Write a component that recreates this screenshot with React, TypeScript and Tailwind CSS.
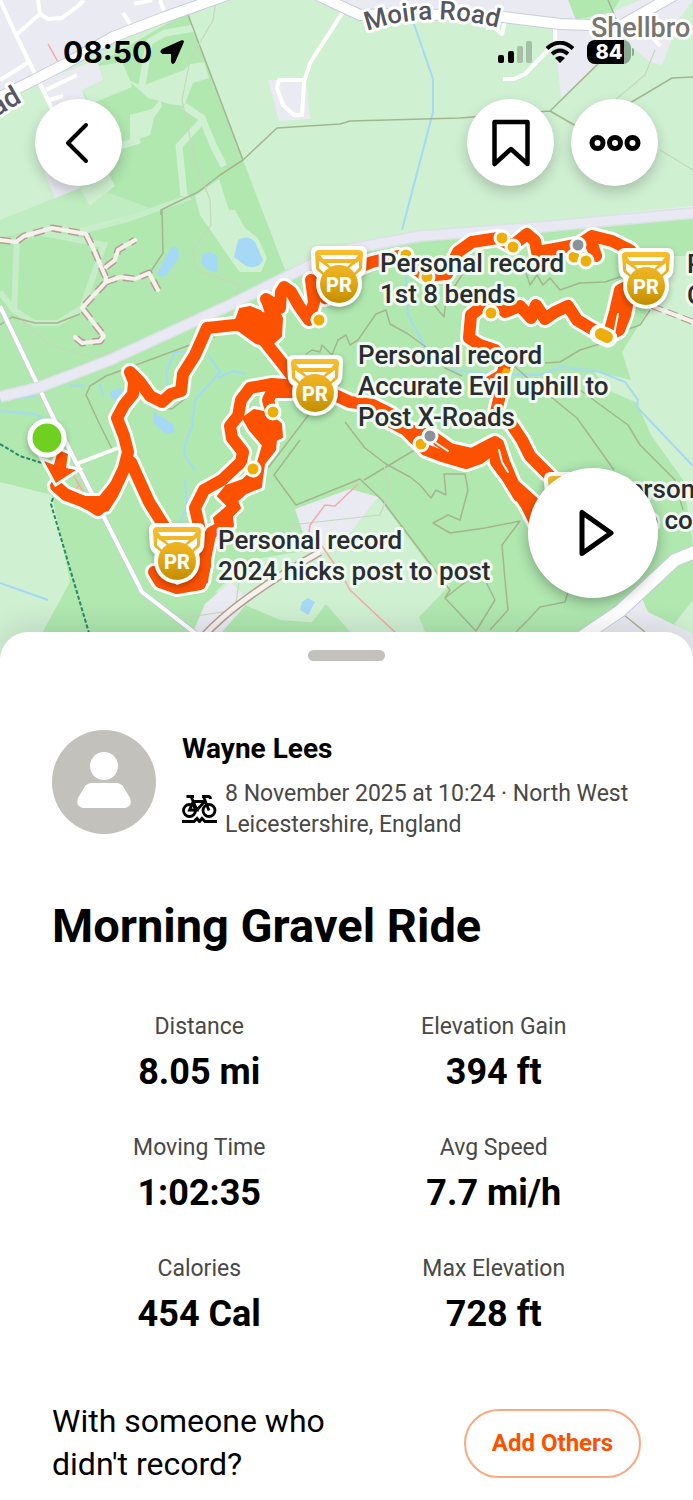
import type { ReactNode } from "react";

const stats = [
  { label: "Distance", value: "8.05 mi" },
  { label: "Elevation Gain", value: "394 ft" },
  { label: "Moving Time", value: "1:02:35" },
  { label: "Avg Speed", value: "7.7 mi/h" },
  { label: "Calories", value: "454 Cal" },
  { label: "Max Elevation", value: "728 ft" },
];

const pins = [
  { x: 339, y: 246, tx: 380, ty: 272, lines: ["Personal record", "1st 8 bends"] },
  { x: 646, y: 248, tx: 687, ty: 273, lines: ["Personal record", "C"] },
  { x: 572, y: 472, tx: 613, ty: 498, lines: ["Personal record", "   the co"] },
  { x: 315, y: 355, tx: 358, ty: 364, lines: ["Personal record", "Accurate Evil uphill to", "Post X-Roads"] },
  { x: 177, y: 523, tx: 218, ty: 549, lines: ["Personal record", "2024 hicks post to post"] },
];

// Segment start / end dots along the route
const dots = [
  [319, 320], [273, 412], [253, 469], [502, 238], [513, 247], [574, 257], [586, 261],
  [491, 313], [421, 444], [427, 277], [406, 255], [556, 483],
];

const route = [
  "M56 486 L66 495 L82 501 L92 506 L98 510 L105 500 L116 485 L124 468 L128 452 L124 436 L117 418 L124 405 L133 394 L134 382 L130 372 L140 382 L150 396 L162 402 L171 394 L181 391 L183 374 L195 355 L207 328 L235 325 L250 322",
  "M262 318 L276 330 L268 303 L266 299 L280 308 L281 292 L284 287 L291 292 L299 306 L309 320 L314 302 L311 280 L325 298 L340 290",
  "M262 338 L278 358 L292 376",
  "M340 275 L372 262 L398 256 L425 276 L447 274 L458 252 L472 242 L498 238 L512 246 L527 234 L535 241 L537 252 L560 248 L580 244 L592 236 L612 241 L630 250 L640 262",
  "M589 240 L596 256 L590 238",
  "M632 284 L620 290 L615 312 L608 337 M630 290 L625 315 L619 330 L606 337",
  "M606 337 L587 326 L577 320 L568 306 L555 312 L545 319 L536 305 L531 318 L520 306 L505 312 L495 300 L480 308 L471 315 L469 338 L480 345 L495 350 L506 362 L502 375 L490 382 L500 395 L496 412 L512 425 L522 440 L530 456 L544 470 L558 484",
  "M320 388 L350 402 L373 405 L391 414 L412 436 L426 450 L442 456 L466 463 L480 458 L498 444 L504 462 L514 486 L527 506 L536 524",
  "M365 408 L402 428 L432 436 L450 449 L472 454 L495 442 L496 462 L508 478 L519 496",
  "M300 386 L272 384 L250 388 L241 400 L238 416 L230 426 L232 438 L243 452 L241 462 L222 480 L204 490 L195 508 L199 526",
  "M300 392 L272 392 L268 400 L272 414",
  "M224 526 L212 532 L205 543 L205 566 L200 584 L177 588 L160 582 L154 572 L172 574",
  "M131 462 L139 480 L149 502 L164 526",
];

// Spots where laps overlap into one wide patch
const patches = [
  "M236 320 L240 309 L250 307 L260 311 L270 322 L274 303 L282 318 L281 336 L270 346 L256 343 L238 330 Z",
  "M243 418 L254 410 L268 413 L281 424 L282 437 L276 440 L275 450 L264 464 L262 478 L261 487 L246 493 L237 501 L240 508 L232 516 L233 526 L217 530 L214 518 L228 506 L218 496 L226 486 L243 480 L257 466 L263 445 L250 430 Z",
  "M54 483 L58 494 L75 503 L88 505 L96 514 L108 510 L117 496 L129 470 L128 450 L116 478 L100 497 L84 497 L66 489 Z",
  "M455 458 L482 448 L497 440 L505 452 L516 480 L538 500 L536 520 L516 496 L496 470 L492 456 L476 462 Z",
  "M202 535 L216 530 L210 560 L207 582 L196 590 L172 590 L158 582 L155 572 L190 582 L202 568 Z",
];

const fireTracks =
  "M0 240 L16 242 L24 236 L52 228 L86 234 L94 250 L106 278 L106 282 L82 308 L104 336 L100 341 L82 343 L75 337 M106 267 L115 260 L118 250 L135 240 M106 282 L120 277 L135 279 L149 273 L158 290";
const lane = "M202 638 Q235 600 320 552";
const townRoads =
  "M0 0 L16 35 L60 125 M38 0 L40 14 L16 35 M40 14 L48 19 L62 18 L78 6 L84 0 M123 13 L131 25 M134 4 L152 0 M160 0 L164 11 M0 80 L29 62 M46 90 L77 75 M49 100 L63 96";
const leftRoad = "M0 97 L30 82 L67 63 L113 37 L165 17 L230 -6";
const moiraRoad = "M315 -6 L360 15 L400 14 L495 16 L560 24 L620 26 L680 -8";
const southRoad = "M570 645 L620 611 L675 560 L700 550";
const mainRoad = "M0 397 L40 387 L110 360 L230 305 L310 265 L343 250 L420 236 L540 227 L693 213";

function Map() {
  return (
    <svg
      className="h-full w-full"
      viewBox="0 0 693 664"
      preserveAspectRatio="xMidYMin slice"
      fontFamily="Roboto, sans-serif"
      role="img"
      aria-label="Route map"
    >
      <defs>
        <linearGradient id="gold" gradientUnits="userSpaceOnUse" x1="0" y1="4" x2="0" y2="58">
          <stop offset="0" stopColor="#f8be30" />
          <stop offset="0.55" stopColor="#e5aa18" />
          <stop offset="1" stopColor="#c18c00" />
        </linearGradient>
        <filter id="lift" x="-30%" y="-30%" width="160%" height="170%">
          <feDropShadow dx="0" dy="3" stdDeviation="3" floodOpacity="0.28" />
        </filter>
        <path id="moira" d="M367 31 Q430 9 503 29" />
      </defs>
      <rect width="693" height="664" fill="#d0f0d2" />

      {/* Woodland */}
      <path fill="#b0e8b0" d="M94 66 L187 12 L243 160 L285 270 L343 250 L540 229 L693 212 V664 H25 L70 582 L52 495 L0 482 V220 L55 198 L86 186 L122 146 L84 98 L82 90 L103 80 Z" />
      <path fill="#b0e8b0" d="M568 0 H620 L612 12 L575 20 Z" />
      <path fill="#d0f0d2" d="M82 90 L103 80 L98 66 L122 62 L130 80 L132 87 L98 101 L90 104 Z" />
      <path fill="#d0f0d2" d="M130 115 L152 109 L160 100 L162 106 L154 118 L150 135 L130 142 Z" />
      <path fill="#d0f0d2" d="M80 188 L108 173 L115 186 L90 206 Z" />
      <path fill="#d0f0d2" d="M128 80 L142 86 L184 70 L190 64 L204 62 L209 78 L193 83 L184 106 L170 104 L148 98 Z" />
      <path fill="none" stroke="#d0f0d2" strokeWidth="7" strokeLinejoin="round" d="M142 86 L149 42 L165 33 L195 28 M120 146 L140 140 M184 106 L202 118 L214 147 L224 166 M201 122 L179 146 L184 196" />
      <path fill="#d0f0d2" d="M219 179 L230 213 L250 252 L255 270 L238 270 L200 215 L195 196 Z" />
      <path fill="#b0e8b0" d="M222 178 L240 160 L273 238 L245 237 Z" />
      <path fill="#d0f0d2" d="M204 210 L235 210 L245 228 L258 238 L267 258 L261 272 L240 272 L228 255 Z" />
      <path fill="none" stroke="#d0f0d2" strokeWidth="6" opacity=".7" d="M0 292 L14 310 L34 323 L58 323 L82 308 L104 245 L38 232 L17 239 L14 312 M78 232 L128 219 L190 197" />
      <path fill="#d0f0d2" d="M0 217 L25 209 L80 182 L150 208 L84 233 L48 228 L0 238 Z" opacity=".5" />

      <path fill="#d0f0d2" d="M622 256 H693 V545 L683 480 L651 435 L637 403 L610 391 L593 371 L631 380 L622 352 L648 310 Z" />
      <path fill="#d0f0d2" d="M378 497 L425 560 L450 585 L419 617 L438 664 H300 L345 625 L280 620 L215 592 L250 560 L340 545 Z" />
      <path fill="#b0e8b0" d="M255 622 L290 633 V664 H280 Z M326 604 L350 632 V664 H280 Z" />
      <path fill="#d0f0d2" d="M693 600 L674 624 L693 640 Z" />

      {/* Built-up areas */}
      <g fill="#eaeaf3">
        <path d="M0 0 H210 L110 35 L20 85 L0 96 Z M38 82 L97 60 L103 80 L82 90 L86 100 L56 120 Z M44 172 L80 188 L55 198 Z" />
        <path d="M268 80 L306 80 L310 119 L279 121 Z M315 0 H568 L576 20 L480 15 L360 18 Z M554 28 L596 25 L618 52 L600 60 L561 98 Z M612 12 L640 0 H693 L680 18 L662 65 L650 62 L630 45 Z" />
        <path d="M295 509 L350 489 L378 497 L350 533 L312 560 Z M193 632 L205 604 L230 582 L250 600 L215 640 Z M575 640 L641 596 L648 612 L693 634 V664 H575 Z" />
        <path d="M620 213 L693 206 V216 L600 224 Z" />
      </g>

      {/* Water */}
      <path fill="#a5d9f5" d="M171 248 Q180 244 179 257 L167 275 Q158 279 157 273 Z M203 254 Q214 249 218 259 V270 Q212 276 201 263 Z M238 240 Q247 234 255 242 L263 260 Q258 270 246 266 L234 257 Z M110 392 Q120 385 125 392 L121 402 Q110 402 110 392 Z M154 412 L173 424 L175 432 L166 434 L153 422 Z M302 602 L308 598 L315 602 L308 615 L300 610 Z" />
      <g fill="none" stroke="#a5d9f5" strokeWidth="2">
        <path d="M414 24 L433 79 L433 112 L402 230 M406 275 L408 315 L426 348 L448 370 L500 374 L540 375 L562 367 L600 372 L625 382 L638 400 L637 407 L657 428 L693 466" />
        <path d="M168 388 L166 372 L175 352 L190 352 M208 355 L220 372 L195 400 L192 425 M218 378 L233 371 L246 374 M70 386 L85 385 M100 384 L103 395 M0 400 L35 396 M0 411 L35 414 L55 425 M193 425 L186 440 L184 455 L195 470 M185 480 L187 505 L180 523 M0 583 L48 600" />
      </g>

      {/* Tracks */}
      <g fill="none" stroke="#a5b590" strokeWidth="1.5" strokeLinejoin="round">
        <path d="M187 12 L243 160 M161 215 V210 L198 192 L220 175 L243 160 L277 128 L340 124 L350 121 L460 118 L550 111 L600 62 M550 111 L576 126 M608 0 L618 24 M630 103 L672 78 L693 77" />
        <path d="M162 210 L163 253 L149 274 M0 325 L12 317 L35 323 L57 323 L80 314 M100 425 L86 395 L90 386 L106 376 L190 345 L200 335 L215 337 M160 408 L172 409 L186 398" />
        <path d="M306 354 L312 350 L320 352 L322 345 L332 355 L338 340 L346 335 L350 345 L358 340 L376 314 L386 310 L390 324 L408 334 L430 350 L445 368 L462 376 M430 300 L444 317 L446 300 L465 270 L470 254" />
        <path d="M525 270 L530 285 L537 275 L543 285 L550 278 L560 290 L580 283 L605 282 L620 277 M650 310 L640 325 L620 332 L606 342 L580 350 L560 362 L545 363" />
        <path d="M345 422 L365 448 L386 464 L410 477 L420 485 L431 498 L436 490 L446 495 L444 474 L465 474 L468 490 L460 520 L448 515 L433 523 L450 533 L485 528 L520 521 L502 545 L505 580 L508 610 L490 630 M364 480 L440 435" />
        <path d="M300 440 L274 475 L296 505 L360 479 L382 500 L450 590 L445 598 L476 631 L495 600 L485 580 M445 598 L468 580 M490 345 L530 380 L577 418 L614 470 M580 390 L628 425 L640 445 L675 480 L683 510 M568 592 L565 602 L540 607 L528 620 L516 632 M268 468 L320 400" />
        <path d="M100 425 L112 449 M624 615 L645 632" />
      </g>
      <path fill="none" stroke="#c5d8b9" strokeWidth="1.2" d="M216 0 L213 20 L190 60 L182 100 L195 160 L210 200 L211 225 L193 250 L196 270 L240 285 L235 300 L160 340 L90 357 L50 345 L20 320 M655 50 L645 75 L615 100 M660 150 L693 170 M146 590 Q150 612 190 617 L235 610 L242 560 M290 525 L380 515 L390 490 L384 465" />
      <g fill="none" strokeLinejoin="round">
        <path stroke="#b59d94" strokeWidth="7" strokeDasharray="11 7" d={fireTracks} />
        <path stroke="#f6f1ec" strokeWidth="4" strokeLinecap="round" d={fireTracks} />
        <path stroke="#b59d94" strokeWidth="6" strokeDasharray="11 5" d="M652 306 L693 322" />
        <path stroke="#f6f1ec" strokeWidth="4" d="M652 306 L693 322" />
        <path stroke="#b59d94" strokeWidth="8" d={lane} />
        <path stroke="#f6f1ec" strokeWidth="5" d={lane} />
      </g>
      <path fill="none" stroke="#f5aaa6" strokeWidth="1.5" d="M48 44 L58 62 M308 540 L310 525 L325 505 L335 506 L358 484 M322 546 L342 575 L350 590 L397 634 M72 473 L84 493 M75 490 L80 484" />
      <path fill="none" stroke="#258b63" strokeWidth="2" strokeDasharray="4 2" d="M0 444 L20 456 L45 464 M53 498 L51 504 L68 562 L89 633" />

      {/* Roads */}
      <g fill="none" stroke="#fff" strokeLinejoin="round">
        <path strokeWidth="4" d={townRoads} />
        <path strokeWidth="4" d="M343 12 L310 63 L304 82 L302 115 L294 115 L283 105 L277 88 L279 80 L304 80 M503 79 L514 79 L525 74 L550 48 L555 42 V28 M486 28 H495 L502 34 L505 22 M650 34 L660 46" />
        <path stroke="#c9cdda" strokeWidth="12" d={leftRoad} />
        <path strokeWidth="10" d={leftRoad} />
        <path stroke="#c9cdda" strokeWidth="12" d={moiraRoad} />
        <path strokeWidth="10" d={moiraRoad} />
        <path stroke="#c9cdda" strokeWidth="14" d={southRoad} />
        <path strokeWidth="12" d={southRoad} />
        <path stroke="#c9cfd6" strokeWidth="6" d="M0 306 L52 415 L142 592 L195 633" />
        <path strokeWidth="4" d="M0 306 L52 415 L142 592 L195 633 M76 464 L118 448" />
      </g>
      <path fill="none" stroke="#dbe2e4" strokeWidth="12" d={mainRoad} />
      <path fill="none" stroke="#e9e9f3" strokeWidth="9" d={mainRoad} />

      {/* Road names */}
      <g fill="#55565f" stroke="#fff" strokeWidth="6" strokeLinejoin="round" style={{ paintOrder: "stroke" }} fontWeight="500">
        <text fontSize="26">
          <textPath href="#moira">Moira Road</textPath>
        </text>
        <text fontSize="28" transform="translate(-4 117) rotate(-30)">ad</text>
        <text fontSize="27" x="591" y="37" fill="#77766f">Shellbro</text>
      </g>

      {/* Route */}
      <g fill="none" strokeLinejoin="round" strokeLinecap="round">
        <g stroke="#fff" strokeWidth="18">
          {route.map((d) => (
            <path key={d} d={d} />
          ))}
        </g>
        <g stroke="#fff" strokeWidth="8">
          {patches.map((d) => (
            <path key={d} d={d} />
          ))}
        </g>
        <g stroke="#fc5200" strokeWidth="12">
          {route.map((d) => (
            <path key={d} d={d} />
          ))}
        </g>
        <g fill="#fc5200" stroke="#fc5200" strokeWidth="2">
          {patches.map((d) => (
            <path key={d} d={d} />
          ))}
        </g>
        <path stroke="#fff" strokeWidth="6" fill="#fc5200" style={{ paintOrder: "stroke" }} strokeLinejoin="miter" d="M44 461 L54 465 L58 450 L68 454 L66 468 L76 470 L56 483 Z" />
        <path stroke="#fff" strokeWidth="2" d="M614 334 L618 314 M499 450 L502 462 L508 472 M436 443 L448 451 M166 575 L177 584 L190 578" />
      </g>
      <g fill="#edae0a" stroke="#fff" strokeWidth="3">
        {dots.map(([x, y]) => (
          <circle key={`${x}-${y}`} cx={x} cy={y} r="7" />
        ))}
        <circle cx="578" cy="245" r="7" fill="#87929a" />
        <circle cx="430" cy="436" r="7" fill="#87929a" />
      </g>
      <path stroke="#fff" strokeWidth="19" strokeLinecap="round" d="M599 334 L608 338" />
      <path stroke="#edae0a" strokeWidth="12" strokeLinecap="round" d="M601 334 L607 337" />
      <path fill="#edae0a" d="M504 367 L511 370 L505 380 L497 384 Z" />
      <circle cx="47" cy="438" r="17" fill="#70d024" stroke="#fff" strokeWidth="5" filter="url(#lift)" />

      {/* Segment medals */}
      {pins.map((pin) => (
        <g key={`${pin.x}-${pin.y}`}>
          <text fontSize="26" fontWeight="500" fill="#2b2c30" stroke="#f0faf1" strokeWidth="6" strokeLinejoin="round" style={{ paintOrder: "stroke" }}>
            {pin.lines.map((line, i) => (
              <tspan key={line} x={line.startsWith(" ") ? pin.tx + 8 : pin.tx} y={pin.ty + i * 31}>
                {line.trim()}
              </tspan>
            ))}
          </text>
          <g transform={`translate(${pin.x} ${pin.y})`}>
            <path filter="url(#lift)" fill="#fff" d="M-21 0 H21 Q28 0 28 7 L27 24 Q26 28 22 31 A23 23 0 1 1 -22 31 Q-26 28 -27 24 L-28 7 Q-28 0 -21 0 Z" />
            <path fill="url(#gold)" d="M-20 4 H20 Q24 4 24 8 L23 22 Q23 24 21 25 L15 30 H-15 L-21 25 Q-23 24 -23 22 L-24 8 Q-24 4 -20 4 Z" />
            <path fill="#fff" d="M-19 9 H19 L16 13 H-16 Z M-12 17 H12 L8 21 Q0 18 -8 21 Z M-20 15 L-10 22 L-15 27 L-20 22 Z M20 15 L10 22 L15 27 L20 22 Z" />
            <circle cy="38" r="19" fill="url(#gold)" />
            <text y="46" textAnchor="middle" fontSize="20" fontWeight="800" fill="#fff">PR</text>
          </g>
        </g>
      ))}
    </svg>
  );
}

function RoundButton({ label, children }: { label: string; children: ReactNode }) {
  return (
    <button
      type="button"
      aria-label={label}
      className="flex h-[87px] w-[87px] items-center justify-center rounded-full bg-white shadow-[0_6px_14px_rgba(0,0,0,0.2)]"
    >
      {children}
    </button>
  );
}

function StatusBar() {
  return (
    <div className="flex h-[47px] items-center justify-between pl-7 pr-6 text-black">
      <div className="flex items-center gap-2">
        <span className="font-['Inter',sans-serif] text-[30px] font-bold leading-none">08:50</span>
        <svg className="h-6 w-6" viewBox="0 0 24 24" aria-hidden="true">
          <path d="M2 9 L21 .5 Q24.500 -.5 23.700 2.500 L15 22.500 Q12.500 25.500 11 22 V14 H2.500 Q-1.500 12 2 9 Z" />
        </svg>
      </div>
      <div className="flex items-center gap-3">
        <svg className="h-[22px] w-9" viewBox="0 0 36 22" aria-hidden="true">
          <rect x="1" y="14" width="6" height="8" rx="2" />
          <rect x="11" y="10" width="6" height="12" rx="2" />
          <rect x="20" y="5" width="6" height="17" rx="2" opacity=".2" />
          <rect x="29" y="0" width="6" height="22" rx="2" opacity=".2" />
        </svg>
        <svg className="h-[22px] w-[30px]" viewBox="0 0 30 22" aria-hidden="true">
          <path fill="none" stroke="#000" strokeWidth="4" d="M2 7.500 Q15 -4 28 7.500 M7 13 Q15 6 23 13" />
          <path d="M10 17 Q15 13 20 17 L15 22 Z" />
        </svg>
        <div className="flex items-center gap-px">
          <div className="flex h-6 w-11 overflow-hidden rounded-lg bg-[linear-gradient(to_right,#000_84%,#8ba892_84%)]">
            <span className="w-full text-center font-['Inter',sans-serif] text-xl font-extrabold leading-6 text-white">84</span>
          </div>
          <span className="h-2 w-0.5 rounded-r-full bg-[#8ba892]" />
        </div>
      </div>
    </div>
  );
}

function BikeIcon() {
  return (
    <svg className="h-7 w-[35px] shrink-0" viewBox="0 0 35 28" fill="none" stroke="#000" strokeWidth="2.800" aria-hidden="true">
      <circle cx="7.500" cy="15.500" r="6" />
      <circle cx="27" cy="15.500" r="6" />
      <path d="M4.500 1.500 H12 M9 1.500 L15 15 H7.500 L11 7 M10.500 6.500 H22 M15 15 L23 6 M20 1.500 H26 Q28.500 1.500 28.500 4 M21.500 1.500 L27 15.500" />
      <path d="M0 26.500 H12 L15 23.500 L17.500 26.500 L20 23.500 L23 26.500 H35" strokeWidth="3" />
    </svg>
  );
}

export default function App() {
  return (
    <div className="w-full overflow-hidden bg-white font-['Roboto',sans-serif] text-black">
      <section className="relative h-[664px] w-full bg-[#b0e8b0]">
        <Map />
        <div className="absolute inset-x-0 top-0 px-[35px] pt-7">
          <StatusBar />
          <div className="mt-6 flex justify-between">
            <RoundButton label="Back">
              <svg className="mr-1 h-11 w-6" viewBox="0 0 24 44" fill="none" stroke="#000" strokeWidth="4" strokeLinecap="round" strokeLinejoin="round">
                <path d="M21 4 L3 22 L21 40" />
              </svg>
            </RoundButton>
            <div className="flex gap-[17px]">
              <RoundButton label="Save">
                <svg className="h-12 w-10" viewBox="0 0 40 48" fill="none" stroke="#000" strokeWidth="4.500" strokeLinejoin="round">
                  <path d="M3.500 3 H36.500 V45 L20 30 L3.500 45 Z" />
                </svg>
              </RoundButton>
              <RoundButton label="More">
                <svg className="h-4 w-[52px]" viewBox="0 0 52 16" fill="none" stroke="#000" strokeWidth="5">
                  <circle cx="8.500" cy="8" r="5.500" />
                  <circle cx="26" cy="8" r="5.500" />
                  <circle cx="43.500" cy="8" r="5.500" />
                </svg>
              </RoundButton>
            </div>
          </div>
        </div>
        <button
          type="button"
          aria-label="Play"
          className="absolute bottom-[66px] right-[35px] flex h-[130px] w-[130px] items-center justify-center rounded-full bg-white shadow-[0_4px_14px_rgba(0,0,0,0.3)]"
        >
          <svg className="ml-2 h-12 w-9" viewBox="0 0 36 48" fill="none" stroke="#000" strokeWidth="5" strokeLinejoin="round">
            <path d="M3 3.500 V44.500 L32 24 Z" />
          </svg>
        </button>
      </section>

      {/* Activity sheet */}
      <section className="relative -mt-8 rounded-t-[28px] bg-white px-[52px] pb-4 shadow-[0_-4px_30px_rgba(0,0,0,0.12)]">
        <div className="flex justify-center pt-[18px]">
          <div className="h-[11px] w-[77px] rounded-full bg-[#c2c1bc]" />
        </div>

        <div className="mt-[69px] flex gap-[26px]">
          <svg className="h-[104px] w-[104px] shrink-0" viewBox="0 0 104 104" role="img" aria-label="Profile photo">
            <circle cx="52" cy="52" r="52" fill="#c2c1bc" />
            <circle cx="52" cy="36" r="14" fill="#fff" />
            <path fill="#fff" d="M40 53 H64 Q69 53 71.500 57 L78 68 Q81 76 73 78 H31 Q23 76 26 68 L32.500 57 Q35 53 40 53 Z" />
          </svg>
          <div>
            <p className="text-[28px] font-bold leading-[38px]">Wayne Lees</p>
            <div className="mt-[10px] flex items-center gap-2">
              <BikeIcon />
              <p className="text-[23px] leading-[31px] text-[#494844]">
                8 November 2025 at 10:24 · North West Leicestershire, England
              </p>
            </div>
          </div>
        </div>

        <h1 className="mt-14 text-[47px] font-bold leading-[60px]">Morning Gravel Ride</h1>

        <dl className="mt-[55px] grid grid-cols-2 gap-y-[37px] text-center">
          {stats.map((stat) => (
            <div key={stat.label}>
              <dt className="text-[23px] leading-8 text-[#494844]">{stat.label}</dt>
              <dd className="mt-1.5 text-[36px] font-bold leading-[46px]">{stat.value}</dd>
            </div>
          ))}
        </dl>

        <div className="mt-[63px] flex items-center justify-between gap-4">
          <p className="max-w-[300px] text-[32px] leading-[43px]">With someone who didn't record?</p>
          <button
            type="button"
            className="h-[69px] w-[177px] rounded-full border-2 border-[#fda880] text-[24px] font-bold text-[#fc5200]"
          >
            Add Others
          </button>
        </div>
      </section>
    </div>
  );
}
